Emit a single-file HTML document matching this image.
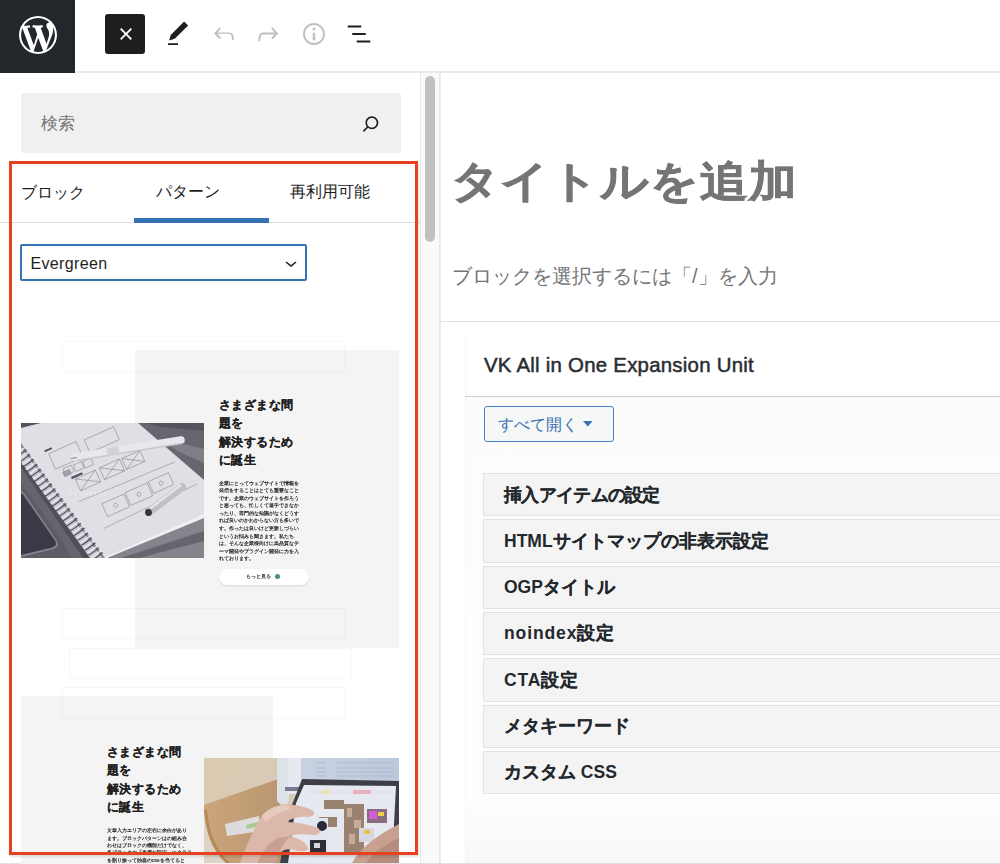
<!DOCTYPE html>
<html lang="ja">
<head>
<meta charset="utf-8">
<style>
*{box-sizing:border-box;margin:0;padding:0}
html,body{width:1000px;height:864px;overflow:hidden;background:#fff}
body{position:relative;font-family:"Liberation Sans",sans-serif;color:#1e1e1e}
.a{position:absolute}
.nw{white-space:nowrap}
svg{display:block}
.j{-webkit-text-stroke:.15px #23282d}
</style>
</head>
<body>
<!-- header -->
<div class="a" style="left:0;top:71px;width:1000px;height:2px;background:#e9e9e9"></div>
<div class="a" style="left:0;top:0;width:75px;height:73px;background:#23272c"></div>
<svg class="a" style="left:18.7px;top:15.9px" width="38" height="38" viewBox="0 0 20 20"><path fill="#fff" d="M20 10c0-5.51-4.490-10-10-10C4.48 0 0 4.49 0 10c0 5.52 4.48 10 10 10 5.51 0 10-4.48 10-10zM7.78 15.37L4.37 6.22c.55-.02 1.170-.08 1.17-.08.5-.06.44-1.13-.06-1.11 0 0-1.45.11-2.37.11-.18 0-.37 0-.58-.01C4.12 2.69 6.87 1.11 10 1.11c2.33 0 4.45.87 6.050 2.34-.68-.11-1.65.39-1.65 1.58 0 .74.45 1.36.9 2.1.35.61.55 1.36.55 2.46 0 1.49-1.4 5-1.4 5l-3.03-8.37c.54-.02.82-.17.82-.17.5-.05.44-1.25-.06-1.22 0 0-1.44.12-2.38.12-.87 0-2.33-.12-2.33-.12-.5-.03-.56 1.2-.06 1.22l.92.08 1.26 3.41zM17.41 10c.24-.64.74-1.870.43-4.25.7 1.29 1.05 2.71 1.05 4.25 0 3.3-1.74 6.3-4.51 7.88.97-2.6 1.94-5.22 3.03-7.88zM6.1 18.09C3.12 16.65 1.11 13.53 1.11 10c0-1.3.23-2.48.72-3.59C3.25 10.3 4.67 14.2 6.1 18.09zm4.03-6.63l2.58 6.98c-.86.29-1.76.45-2.71.45-.79 0-1.57-.11-2.29-.33.81-2.38 1.62-4.74 2.42-7.1z"/></svg>
<div class="a" style="left:105px;top:14px;width:40px;height:40px;background:#1e1e1e;border-radius:3px"></div>
<svg class="a" style="left:110.6px;top:18.9px" width="30" height="30" viewBox="0 0 24 24"><path fill="#fff" d="M12 13.06l3.712 3.713 1.061-1.06L13.061 12l3.712-3.712-1.06-1.06L12 10.938 8.288 7.227l-1.061 1.06L10.939 12l-3.712 3.712 1.06 1.061L12 13.061z"/></svg>
<svg class="a" style="left:163px;top:18.9px" width="30" height="30" viewBox="0 0 24 24"><path fill="#1e1e1e" d="M20.1 5.1L16.9 2 6.2 12.7l-1.3 4.4 4.5-1.3L20.1 5.1zM4 20.8h8v-1.5H4v1.5z"/></svg>
<svg class="a" style="left:208.5px;top:18.8px" width="30" height="30" viewBox="0 0 24 24"><path fill="#c0c0c0" d="M18.3 11.7c-.6-.6-1.4-.9-2.3-.9H6.7l2.9-3.3-1.1-1-4.5 5L8.5 16l1.1-1-2.9-3.3H16c.5 0 .9.2 1.3.5 1 1 1 3.4 1 4.5v.3h1.5v-.2c0-1.5 0-4.3-1.5-5.9z"/></svg>
<svg class="a" style="left:253.3px;top:18.8px" width="30" height="30" viewBox="0 0 24 24"><path fill="#c0c0c0" d="M15.6 6.5l-1.1 1 2.9 3.3H8c-.9 0-1.700.3-2.3.9-1.4 1.5-1.4 4.2-1.4 5.8v.2h1.5v-.3c0-1.1 0-3.5 1-4.5.3-.3.7-.5 1.3-.5h9.2L14.5 15l1.1 1.1 4.6-4.6-4.6-5z"/></svg>
<svg class="a" style="left:298.8px;top:18.75px" width="30" height="30" viewBox="0 0 24 24"><path fill="#c0c0c0" d="M12 3.2c-4.8 0-8.8 3.9-8.8 8.8 0 4.8 3.9 8.8 8.8 8.8 4.8 0 8.8-3.9 8.8-8.8 0-4.8-4-8.8-8.8-8.8zm0 16c-4 0-7.2-3.3-7.2-7.2C4.8 8 8 4.8 12 4.8s7.2 3.3 7.2 7.2c0 4-3.200 7.2-7.2 7.2zM11 17h2v-6h-2v6zm0-8h2V7h-2v2z"/></svg>
<svg class="a" style="left:343.75px;top:18.56px" width="30" height="30" viewBox="0 0 24 24"><path fill="#1e1e1e" d="M13.8 5.2H3v1.5h10.8V5.2zm-3.6 12v1.5H21v-1.5H10.2zm7.2-6H6.6v1.5h10.8v-1.5z"/></svg>

<!-- sidebar scrollbar -->
<div class="a" style="left:420px;top:73px;width:20px;height:791px;background:#fafafa;border-left:1px solid #e8e8e8;border-right:1px solid #e8e8e8"></div>
<div class="a" style="left:425px;top:76px;width:10px;height:166px;background:#c1c1c1;border-radius:5px"></div>
<div class="a" style="left:0;top:863px;width:1000px;height:1px;background:#e0e0e0"></div>

<!-- search -->
<div class="a" style="left:21px;top:93px;width:380px;height:60px;background:#f0f0f0;border-radius:2px"></div>
<div class="a nw" style="left:41px;top:112px;font-size:17px;color:#757575">検索</div>
<svg class="a" style="left:357.9px;top:110.5px" width="25.6" height="25.6" viewBox="0 0 24 24"><path fill="#1e1e1e" d="M13 5c-3.3 0-6 2.7-6 6 0 1.4.5 2.7 1.3 3.7l-3.8 3.8 1.1 1.1 3.8-3.8c1 .8 2.300 1.3 3.7 1.3 3.3 0 6-2.7 6-6S16.3 5 13 5zm0 10.5c-2.5 0-4.5-2-4.5-4.5s2-4.5 4.5-4.5 4.5 2 4.5 4.5-2 4.5-4.5 4.5z"/></svg>

<!-- tabs -->
<div class="a" style="left:0;top:222px;width:420px;height:1px;background:#dcdcdc"></div>
<div class="a" style="left:134px;top:218px;width:134.5px;height:5px;background:#3373b6"></div>
<div class="a nw" style="left:21px;top:183px;font-size:16px;color:#1e1e1e">ブロック</div>
<div class="a nw" style="left:156px;top:181.5px;font-size:16px;color:#1e1e1e">パターン</div>
<div class="a nw" style="left:290px;top:182px;font-size:16px;color:#1e1e1e">再利用可能</div>

<!-- select -->
<div class="a" style="left:20px;top:244px;width:287px;height:37px;border:2px solid #3373b6;border-radius:2px;background:#fff"></div>
<div class="a nw" style="left:30.5px;top:254.5px;font-size:16px;letter-spacing:.35px;color:#1e1e1e">Evergreen</div>
<svg class="a" style="left:279px;top:251px" width="24" height="24" viewBox="0 0 24 24"><path fill="#1e1e1e" d="M17.5 11.6L12 16l-5.5-4.4.9-1.2L12 14l4.5-3.6 1 1.2z"/></svg>

<!-- PATTERNS placeholder -->
<!-- pattern 1 -->
<div class="a" style="left:135px;top:350px;width:264px;height:298px;background:#f4f4f4"></div>
<div class="a" style="left:62px;top:341px;width:283px;height:31px;border:1px solid rgba(0,0,0,.028)"></div>
<svg class="a" style="left:21px;top:422.5px;filter:blur(.3px)" width="183" height="135" viewBox="0 0 183 135">
<rect width="183" height="135" fill="#727179"/>
<polygon points="117,0 183,0 183,57" fill="#67666e"/>
<polygon points="125,0 183,0 183,8 140,4" fill="#55545c"/>
<polygon points="142,16 183,26 183,40 156,28" fill="#807f87"/>
<polygon points="183,93 183,135 84,135" fill="#85848c"/>
<polygon points="183,108 183,118 118,135 100,135" fill="#66656d"/>
<polygon points="0,0 20,0 0,5" fill="#55545c"/>
<polygon points="0,34 55,108 72,135 0,135" fill="#66656d"/>
<polygon points="0,60 42,118 50,135 0,135" fill="#5e5d65"/>
<polygon points="0,68 3,70 36,118 37,123 33,126 0,134" fill="#85838c"/>
<polygon points="0,70 2,71.5 34.6,118.5 35,122 31.5,124.5 0,132" fill="#3b3946"/>
<polygon points="0,5 20,0 117,0 183,57 183,93 84,135 78,135 0,26" fill="#dfdfe5"/>
<polygon points="183,91 183,95 86,135 82,135" fill="#f0f0f4"/>
<polygon points="0,20 84,135 62,135 0,44" fill="#3f3d48" opacity=".55"/>
<polygon points="0,24 81,135 69,135 0,39" fill="#c9c8d0"/>
<path d="M3.4,24.7 L-6.1,31.7 M7.0,29.6 L-2.5,36.6 M10.6,34.5 L1.1,41.5 M14.3,39.4 L4.8,46.4 M17.9,44.3 L8.4,51.3 M21.5,49.2 L12.0,56.2 M25.2,54.1 L15.7,61.1 M28.8,59.1 L19.3,66.1 M32.5,64.0 L23.0,71.0 M36.1,68.9 L26.6,75.9 M39.7,73.8 L30.2,80.8 M43.4,78.7 L33.9,85.7 M47.0,83.6 L37.5,90.6 M50.6,88.5 L41.1,95.5 M54.3,93.4 L44.8,100.4 M57.9,98.3 L48.4,105.3 M61.5,103.2 L52.0,110.2 M65.2,108.1 L55.7,115.1 M68.8,113.1 L59.3,120.1 M72.5,118.0 L63.0,125.0 M76.1,122.9 L66.6,129.9 M79.7,127.8 L70.2,134.8 " stroke="#eeeef2" stroke-width="1.2" fill="none"/>
<path d="M5.3,26.5 C1.8,29.5 -1.2,32.0 -5.2,34.0 M9.0,31.4 C5.5,34.4 2.5,36.9 -1.5,38.9 M12.6,36.3 C9.1,39.3 6.1,41.8 2.1,43.8 M16.2,41.2 C12.7,44.2 9.7,46.7 5.7,48.7 M19.9,46.1 C16.4,49.1 13.4,51.6 9.4,53.6 M23.5,51.0 C20.0,54.0 17.0,56.5 13.0,58.5 M27.1,55.9 C23.6,58.9 20.6,61.4 16.6,63.4 M30.8,60.8 C27.3,63.8 24.3,66.3 20.3,68.3 M34.4,65.7 C30.9,68.7 27.9,71.2 23.9,73.2 M38.0,70.6 C34.5,73.6 31.5,76.1 27.5,78.1 M41.7,75.5 C38.2,78.5 35.2,81.0 31.2,83.0 M45.3,80.5 C41.8,83.5 38.8,86.0 34.8,88.0 M49.0,85.4 C45.5,88.4 42.5,90.9 38.5,92.9 M52.6,90.3 C49.1,93.3 46.1,95.8 42.1,97.8 M56.2,95.2 C52.7,98.2 49.7,100.7 45.7,102.7 M59.9,100.1 C56.4,103.1 53.4,105.6 49.4,107.6 M63.5,105.0 C60.0,108.0 57.0,110.5 53.0,112.5 M67.1,109.9 C63.6,112.9 60.6,115.4 56.6,117.4 M70.8,114.8 C67.3,117.8 64.3,120.3 60.3,122.3 M74.4,119.7 C70.9,122.7 67.9,125.2 63.9,127.2 M78.0,124.6 C74.5,127.6 71.5,130.1 67.5,132.1 M81.7,129.5 C78.2,132.5 75.2,135.0 71.2,137.0 " stroke="#4d4b58" stroke-width="1.2" fill="none"/>
<g fill="none" stroke="#8e8d96" stroke-width=".6">
<g transform="translate(44.8,32.4) rotate(-24)"><rect x="-15.0" y="-8.5" width="30.0" height="17.0"/></g>
<g transform="translate(80.8,16.7) rotate(-24)"><rect x="-16.0" y="-7.0" width="32.0" height="14.0"/></g>
<g transform="translate(47.5,47.2) rotate(-24)"><rect x="-4.5" y="-3.5" width="9" height="7"/></g>
<g transform="translate(57.7,43.5) rotate(-24)"><rect x="-4.5" y="-3.5" width="9" height="7"/></g>
<g transform="translate(67,40.1) rotate(-24)"><rect x="-4.5" y="-3.5" width="9" height="7"/></g>
<g transform="translate(67,57.4) rotate(-24)"><rect x="-11.0" y="-6.5" width="22.0" height="13.0"/><path d="M-11.0,-6.5 L11.0,6.5 M11.0,-6.5 L-11.0,6.5"/></g>
<g transform="translate(91,46.3) rotate(-24)"><rect x="-11.0" y="-6.5" width="22.0" height="13.0"/><path d="M-11.0,-6.5 L11.0,6.5 M11.0,-6.5 L-11.0,6.5"/></g>
<g transform="translate(112.3,37) rotate(-24)"><rect x="-10.0" y="-6.0" width="20.0" height="12.0"/><path d="M-10.0,-6.0 L10.0,6.0 M10.0,-6.0 L-10.0,6.0"/></g>
<g transform="translate(94.7,82.3) rotate(-24)"><rect x="-12.0" y="-7.0" width="24.0" height="14.0"/><circle r="2"/></g>
<g transform="translate(117.9,71.2) rotate(-24)"><rect x="-12.0" y="-7.0" width="24.0" height="14.0"/><circle r="2"/></g>
<g transform="translate(140,60.1) rotate(-24)"><rect x="-11.0" y="-6.5" width="22.0" height="13.0"/><circle r="2"/></g>
<path d="M57.7,78.6 L154,38.9 M82.7,105.5 L176,61"/>
</g>
<g fill="#55545c"><g transform="translate(27.2,26.8) rotate(-24)"><rect x="-4" y="-1" width="8" height="2"/></g><g transform="translate(55.9,52.7) rotate(-24)"><rect x="-6" y="-1.2" width="12" height="2.4"/></g><g transform="translate(46,50) rotate(-24)"><rect x="-4" y="-3" width="8" height="6" fill="#a09fa8"/></g></g>

<line x1="54" y1="34" x2="160" y2="17" stroke="#e8e8ec" stroke-width="7.5" stroke-linecap="round"/>
<line x1="56" y1="37.5" x2="160" y2="20.5" stroke="#c6c6cc" stroke-width="1.6"/>
<line x1="86" y1="29.5" x2="98" y2="27.5" stroke="#d2d2d8" stroke-width="8"/>
<line x1="50" y1="35.5" x2="56" y2="34.5" stroke="#a4a4ac" stroke-width="1.5"/>
<line x1="128" y1="89" x2="161" y2="64" stroke="#c0c0c8" stroke-width="8" stroke-linecap="round"/>
<line x1="129" y1="85.5" x2="160" y2="62" stroke="#e3e3e8" stroke-width="2.6"/>
<circle cx="127.5" cy="89.5" r="3.4" fill="#35343c"/>
<text x="47" y="72" font-size="5.3" fill="#fff" opacity=".5" font-family="Liberation Sans">タイトルテキスト</text>
</svg>
<div class="a" style="left:219px;top:395.5px;width:200px">
<div style="font-size:12.4px;letter-spacing:.4px;line-height:18.5px;font-weight:bold;color:#1e1e1e;-webkit-text-stroke:.12px #1e1e1e">さまざまな問<br>題を<br>解決するため<br>に誕生</div>
</div>
<div class="a nw" style="left:219px;top:479px;transform:scale(.5);transform-origin:0 0;font-size:10px;line-height:15.08px;color:#222;-webkit-text-stroke:.35px #222">企業にとってウェブサイトで情報を<br>発信をすることはとても重要なこと<br>です。企業のウェブサイトを作ろう<br>と思っても、忙しくて着手できなか<br>ったり、専門的な知識がなくどうす<br>れば良いのかわからない方も多いで<br>す。作ったは良いけど更新しづらい<br>というお悩みも聞きます。私たち<br>は、そんな企業様向けに高品質なテ<br>ーマ開発やプラグイン開発に力を入<br>れております。</div>
<div class="a" style="left:219px;top:569px;width:90px;height:15.5px;background:#fff;border-radius:8px;box-shadow:0 1px 2px rgba(0,0,0,.12)"></div>
<div class="a nw" style="left:246px;top:572.5px;transform:scale(.5);transform-origin:0 0;font-size:10px;color:#444;-webkit-text-stroke:.4px #444">もっと見る</div>
<div class="a" style="left:275px;top:573.7px;width:5.3px;height:5.3px;border-radius:50%;background:#4a8c8a"></div>
<div class="a" style="left:62px;top:608px;width:283px;height:31px;border:1px solid rgba(0,0,0,.028)"></div>
<div class="a" style="left:69px;top:648px;width:283px;height:31px;border:1px solid rgba(0,0,0,.028)"></div>

<!-- pattern 2 -->
<div class="a" style="left:21px;top:696px;width:252px;height:170px;background:#f4f4f4"></div>
<div class="a" style="left:62px;top:687px;width:283px;height:32px;border:1px solid rgba(0,0,0,.028)"></div>
<div class="a" style="left:107px;top:742.5px;width:200px">
<div style="font-size:12.4px;letter-spacing:.4px;line-height:18.5px;font-weight:bold;color:#1e1e1e;-webkit-text-stroke:.12px #1e1e1e">さまざまな問<br>題を<br>解決するため<br>に誕生</div>
</div>
<div class="a nw" style="left:107px;top:827px;transform:scale(.5);transform-origin:0 0;font-size:10px;line-height:14.8px;color:#222;-webkit-text-stroke:.35px #222">文章入力エリアの左右に余白があり<br>ます。ブロックパターンはの組み合<br>わせはブロックの機能だけでなく、<br>各ブロックの「高度な設定」にクラス<br>を割り振って独自のcssを当てると</div>
<svg class="a" style="left:204px;top:757.5px;filter:blur(.45px)" width="195" height="105" viewBox="0 0 195 105">
<defs>
<linearGradient id="wall" x1="0" y1="0" x2="1" y2="0.3"><stop offset="0" stop-color="#dccab0"/><stop offset="1" stop-color="#d2c9bd"/></linearGradient>
<linearGradient id="tbl" x1="0" y1="0" x2="1" y2="0"><stop offset="0" stop-color="#cba57a"/><stop offset="1" stop-color="#b99672"/></linearGradient>
<linearGradient id="mon" x1="0" y1="0" x2="1" y2="0"><stop offset="0" stop-color="#c9d2e2"/><stop offset="1" stop-color="#bcc8dc"/></linearGradient>
</defs>
<rect width="195" height="105" fill="url(#wall)"/>
<path d="M0,47 L74,21 L80,105 L0,105 Z" fill="url(#tbl)"/>
<path d="M0,52 C2,75 8,92 22,105 L0,105 Z" fill="#ddd3c6"/>
<path d="M0,52 C2,75 8,92 22,105 L26,105 C12,92 5,75 3,52 Z" fill="#b88a58"/>
<rect x="96" y="0" width="99" height="24" fill="url(#mon)"/>
<g stroke="#aab6cc" stroke-width=".7"><path d="M112,5 H122 M132,5 H190 M112,10 H122 M132,10 H190 M112,14 H122 M132,14 H190 M112,18 H122 M132,18 H190"/></g>
<path d="M73,0 H85 V42 Q85,46 80,46 Q73,46 73,42 Z" fill="#dde1e8"/>
<rect x="84" y="0" width="13" height="36" fill="#e6e9f0"/>
<rect x="81" y="29" width="14" height="4" fill="#7a7890"/>
<polygon points="21,66 55,58 57,73 23,78" fill="#dcdcdf"/>
<polygon points="42,67 54,64 55,68 43,71" fill="#a8cc8e"/>
<polygon points="98,21 195,23 195,105 76,105 88,47" fill="#3e3e46"/>
<polygon points="100,27 192,28 188,105 84,105 92,45" fill="#e6e9f0"/>
<rect x="104" y="32" width="84" height="4" fill="#e2e4ec"/>
<rect x="118" y="32" width="7" height="4" fill="#e8e2a8"/>
<rect x="149" y="32" width="18" height="4" fill="#e8b0c0"/>
<g fill="#9a8270">
<rect x="120" y="42" width="20" height="9"/>
<rect x="115" y="59" width="18" height="10"/>
<rect x="140" y="46" width="20" height="49"/>
</g>
<g fill="#c6ab98"><rect x="143" y="50" width="5" height="9"/><rect x="150" y="62" width="7" height="8"/><rect x="145" y="76" width="6" height="10"/></g>
<rect x="163" y="51" width="20" height="14" fill="#8c6a84"/>
<rect x="165" y="53" width="8" height="8" fill="#d060d0"/>
<rect x="174" y="54" width="6" height="4" fill="#e8d04c"/>
<rect x="155" y="70" width="15" height="14" fill="#d8d6e0"/>
<rect x="160" y="72" width="6" height="4" fill="#e4c448"/>
<rect x="104" y="60" width="20" height="40" fill="#dfe6ef"/>
<circle cx="118" cy="68" r="5" fill="#2a2834"/>
<rect x="106" y="82" width="16" height="12" fill="#2e2c38"/>
<rect x="110" y="85" width="6" height="5" fill="#d8d8e0"/>
<path d="M36,105 C42,88 50,70 58,58 C62,52 70,48 80,47 C90,46 100,48 108,52 C112,55 110,59 104,59 C96,58 88,60 82,64 C92,64 104,66 114,70 C118,73 116,77 110,77 C100,76 92,76 86,78 C94,80 102,84 104,90 C104,94 96,94 90,92 C84,90 78,92 74,96 L70,105 Z" fill="#dcb8aa"/>
<path d="M58,58 C62,52 70,48 80,47 C86,47 88,50 84,52 C76,54 68,58 62,64 Z" fill="#e6cabe"/>
<path d="M54,105 C58,92 66,84 74,80 L86,78 C80,84 74,94 72,105 Z" fill="#c9a090"/>
<path d="M148,105 C156,90 172,78 195,66 L195,105 Z" fill="#c8a090"/>
<path d="M162,105 C170,94 182,86 195,80 L195,105 Z" fill="#b88c7c"/>
</svg>


<!-- red highlight -->
<div class="a" style="left:9px;top:161px;width:409px;height:694px;border:3px solid #e8411f;box-shadow:1px 2px 2px rgba(0,0,0,.12)"></div>

<!-- editor -->
<div class="a" style="left:440px;top:73px;width:1px;height:790px;background:#ececec"></div>
<div class="a nw" style="left:450.5px;top:149.5px;font-size:48px;letter-spacing:.88px;font-weight:bold;color:#757575;-webkit-text-stroke:.8px #757575;transform:scaleY(.9);transform-origin:0 32px">タイトルを追加</div>
<div class="a nw" style="left:452px;top:263px;font-size:20px;color:#757575">ブロックを選択するには「/」を入力</div>
<div class="a" style="left:441px;top:321px;width:559px;height:1px;background:#e0e0e0"></div>

<!-- VK panel -->
<div class="a" style="left:465px;top:334px;width:535px;height:529px;border-left:1px solid #f6f6f6;background:#fff"></div>
<div class="a" style="left:466px;top:397px;width:534px;height:466px;background:linear-gradient(#fcfcfc,#fefefe 85%,#f8f8f8)"></div>
<div class="a nw" style="left:484px;top:353.5px;font-size:20.4px;letter-spacing:.25px;-webkit-text-stroke:.5px #2a2d31;color:#2a2d31">VK All in One Expansion Unit</div>
<div class="a" style="left:465px;top:396px;width:535px;height:1px;background:#d0d0d0"></div>
<div class="a" style="left:483.5px;top:405.5px;width:130px;height:36.5px;border:1.3px solid #4a80c0;border-radius:3px;background:#f6f7f7"></div>
<div class="a nw" style="left:497.5px;top:414.5px;font-size:15.6px;color:#3a72b4">すべて開く</div>
<svg class="a" style="left:583px;top:420.5px" width="10" height="6" viewBox="0 0 10 6"><path fill="#3a72b4" d="M0 0h9.6L4.8 5.5z"/></svg>

<div class="a" style="left:483px;top:473.00px;width:530px;height:43.3px;background:#f4f4f4;border:1px solid #e2e2e2"></div>
<div class="a nw" style="left:504px;top:482.50px;font-size:17.5px;letter-spacing:-.7px;font-weight:bold;color:#23282d"><span class="j">挿入アイテムの設定</span></div>
<div class="a" style="left:483px;top:519.33px;width:530px;height:43.3px;background:#f4f4f4;border:1px solid #e2e2e2"></div>
<div class="a nw" style="left:504px;top:528.83px;font-size:17.5px;font-weight:bold;color:#23282d">HTML<span class="j">サイトマップの非表示設定</span></div>
<div class="a" style="left:483px;top:565.66px;width:530px;height:43.3px;background:#f4f4f4;border:1px solid #e2e2e2"></div>
<div class="a nw" style="left:504px;top:575.16px;font-size:17.5px;font-weight:bold;color:#23282d">OGP<span class="j">タイトル</span></div>
<div class="a" style="left:483px;top:611.99px;width:530px;height:43.3px;background:#f4f4f4;border:1px solid #e2e2e2"></div>
<div class="a nw" style="left:504px;top:621.49px;font-size:17.5px;letter-spacing:.9px;font-weight:bold;color:#23282d">noindex<span class="j">設定</span></div>
<div class="a" style="left:483px;top:658.32px;width:530px;height:43.3px;background:#f4f4f4;border:1px solid #e2e2e2"></div>
<div class="a nw" style="left:504px;top:667.82px;font-size:17.5px;letter-spacing:.8px;font-weight:bold;color:#23282d">CTA<span class="j">設定</span></div>
<div class="a" style="left:483px;top:704.65px;width:530px;height:43.3px;background:#f4f4f4;border:1px solid #e2e2e2"></div>
<div class="a nw" style="left:504px;top:714.15px;font-size:17.5px;font-weight:bold;color:#23282d"><span class="j">メタキーワード</span></div>
<div class="a" style="left:483px;top:750.98px;width:530px;height:43.3px;background:#f4f4f4;border:1px solid #e2e2e2"></div>
<div class="a nw" style="left:504px;top:760.48px;font-size:17.5px;font-weight:bold;color:#23282d"><span class="j">カスタム</span> CSS</div>

</body>
</html>
